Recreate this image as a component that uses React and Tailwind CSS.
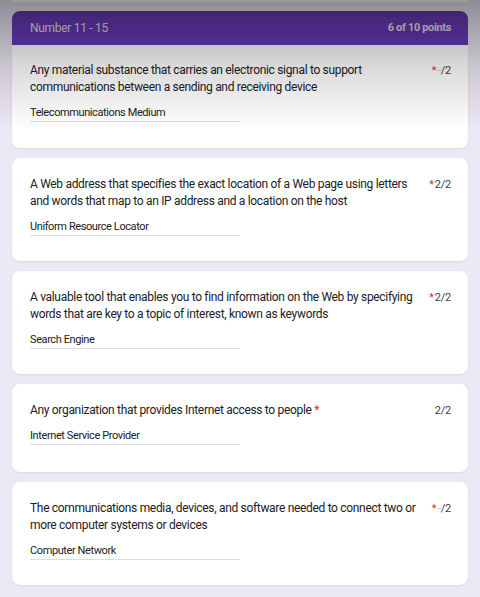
import React from 'react'

const QUESTIONS = [
  {
    text: 'Any material substance that carries an electronic signal to support communications between a sending and receiving device',
    answer: 'Telecommunications Medium',
    score: null,
  },
  {
    text: 'A Web address that specifies the exact location of a Web page using letters and words that map to an IP address and a location on the host',
    answer: 'Uniform Resource Locator',
    score: '2/2',
  },
  {
    text: 'A valuable tool that enables you to find information on the Web by specifying words that are key to a topic of interest, known as keywords',
    answer: 'Search Engine',
    score: '2/2',
  },
  {
    text: 'Any organization that provides Internet access to people',
    answer: 'Internet Service Provider',
    score: '2/2',
    inlineStar: true,
  },
  {
    text: 'The communications media, devices, and software needed to connect two or more computer systems or devices',
    answer: 'Computer Network',
    score: null,
  },
]

function Points({ score, star }) {
  return (
    <div className="shrink-0 text-[11px] leading-[17px] tracking-[-0.2px] text-[#3c4043] whitespace-nowrap">
      {star && <span className="text-[#d93025] mr-[1px]">*</span>}
      {score ? score : (
        <>
          <span className="text-[7px] text-[#9aa0a6] align-middle">--</span>/2
        </>
      )}
    </div>
  )
}

function QuestionBody({ q }) {
  return (
    <>
      <div className="flex items-start">
        <p className="flex-1 pr-[6px] text-[12px] leading-[17px] tracking-[-0.32px] text-[#202124]">
          {q.text}
          {q.inlineStar && <span className="text-[#d93025]"> *</span>}
        </p>
        <Points score={q.score} star={!q.inlineStar} />
      </div>
      <div className="mt-[10px] w-[210px] border-b border-[#dadce0] pb-[1px] text-[11px] leading-[14px] tracking-[-0.4px] text-[#202124]">
        {q.answer}
      </div>
    </>
  )
}

export default function App() {
  return (
    <div className="relative min-h-[597px] bg-[#ede8f5] font-['Roboto',sans-serif] overflow-hidden">
      {/* tail of previous card */}
      <div className="mx-[12px] h-[2px] rounded-b-lg bg-white" />

      <div className="flex flex-col gap-[10px] px-[12px] pt-[9px] pb-6">
        {/* section card */}
        <div className="rounded-lg bg-white overflow-hidden shadow-[0_1px_2px_rgba(0,0,0,0.08)]">
          <div className="flex items-center justify-between bg-[#673ab7] pl-[18px] pr-[17px] h-[34px]">
            <span className="text-[12px] tracking-[-0.3px] text-[#e4def0]">Number 11 - 15</span>
            <span className="text-[11px] font-bold tracking-[-0.35px] text-[#e4def0]">6 of 10 points</span>
          </div>
          <div className="pl-[18px] pr-[17px] pt-[17px] pb-[26px]">
            <QuestionBody q={QUESTIONS[0]} />
          </div>
        </div>

        {QUESTIONS.slice(1).map((q) => (
          <div
            key={q.answer}
            className={`rounded-lg bg-white pl-[18px] pr-[17px] pt-[18px] shadow-[0_1px_2px_rgba(0,0,0,0.08)] ${
              q.inlineStar ? 'pb-[27px]' : 'pb-[25px]'
            }`}
          >
            <QuestionBody q={q} />
          </div>
        ))}
      </div>

      {/* dark fade over the top of the screenshot */}
      <div className="pointer-events-none absolute inset-x-0 top-0 h-[130px] bg-gradient-to-b from-black/40 via-black/15 to-transparent" />
    </div>
  )
}
